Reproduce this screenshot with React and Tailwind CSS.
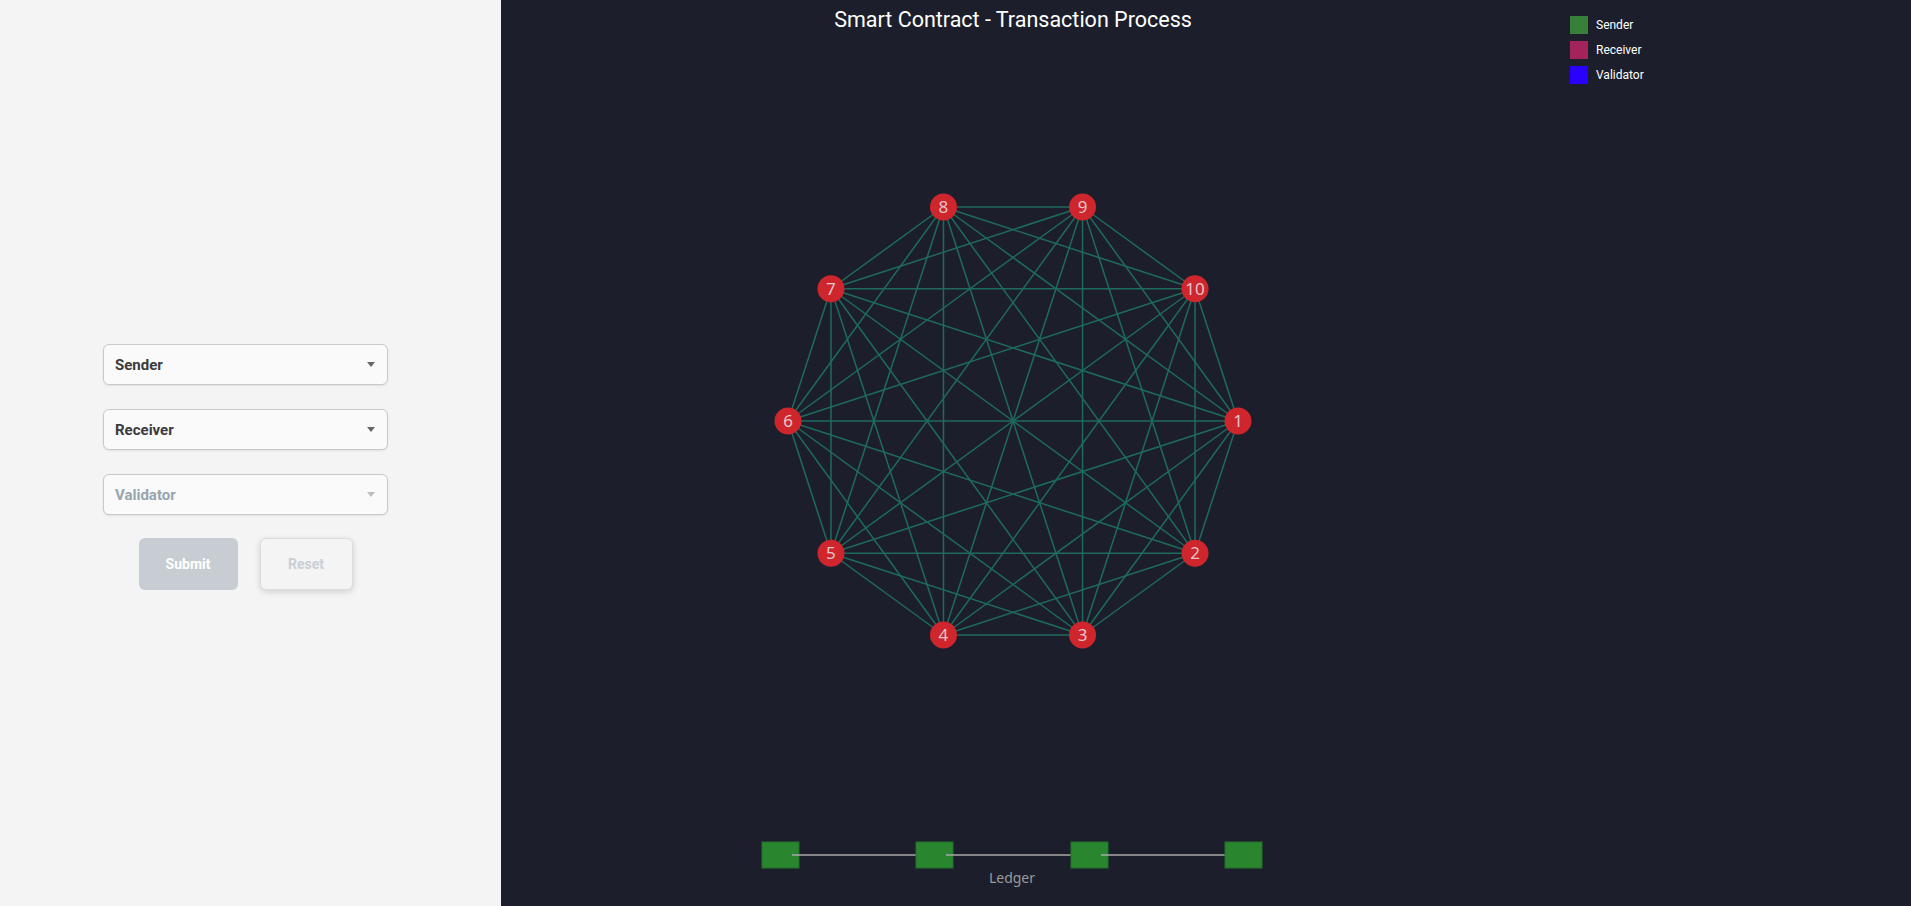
import React from "react";

const CX = 512;
const CY = 381;
const R = 225;

const nodes = Array.from({ length: 10 }, (_, i) => {
  const a = (i * 36 * Math.PI) / 180;
  return { id: i + 1, x: CX + R * Math.cos(a), y: CY + R * Math.sin(a) };
});

const edges = [];
nodes.forEach((a, i) => {
  nodes.slice(i + 1).forEach((b) => edges.push([a, b]));
});

const legend = [
  { label: "Sender", color: "bg-[#37803a]" },
  { label: "Receiver", color: "bg-[#a3235a]" },
  { label: "Validator", color: "bg-[#2a00ff]" },
];

const blocks = [261, 415, 570, 724];

function SelectBox({ label, muted }) {
  return (
    <div className="flex h-[41px] w-[285px] items-center justify-between rounded-[6px] border border-[#c9c9c9] bg-[#fafafa] pl-[11px] pr-[12px] shadow-[0_1px_2px_rgba(0,0,0,0.08)]">
      <span className={`pt-px text-[15px] font-bold ${muted ? "text-[#98a4ae]" : "text-[#3b3b3b]"}`}>{label}</span>
      <span
        className={`h-0 w-0 border-x-[4px] border-t-[5px] border-x-transparent ${muted ? "border-t-[#bdbdbd]" : "border-t-[#666]"}`}
      />
    </div>
  );
}

export default function App() {
  return (
    <div className="flex h-[906px] w-full font-['Roboto',sans-serif]">
      {/* form panel */}
      <div className="h-full w-[501px] shrink-0 bg-[#f4f4f4] pl-[103px] pt-[344px]">
        <div className="flex w-[285px] flex-col gap-[24px]">
          <SelectBox label="Sender" />
          <SelectBox label="Receiver" />
          <SelectBox label="Validator" muted />
          <div className="-mt-px flex justify-center gap-[22px]">
            <button className="h-[52px] w-[99px] rounded-[6px] bg-[#c7cdd2] text-[14px] font-bold text-white">
              Submit
            </button>
            <button className="h-[52px] w-[93px] rounded-[6px] border border-[#dcdcdc] bg-[#f4f4f4] text-[14px] font-bold text-[#c9cfd4] shadow-[0_2px_6px_rgba(0,0,0,0.15)]">
              Reset
            </button>
          </div>
        </div>
      </div>

      {/* chart panel */}
      <div className="flex h-full flex-1 bg-[#1c1f2b]">
        <div className="flex w-[1024px] shrink-0 flex-col">
          <div className="h-[40px] text-center text-[21.5px] leading-[40px] text-white">
            Smart Contract - Transaction Process
          </div>
          <svg width="1024" height="760" className="block">
            {edges.map(([a, b], i) => (
              <line key={i} x1={a.x} y1={a.y} x2={b.x} y2={b.y} stroke="#1e6b5d" strokeWidth="1.5" />
            ))}
            {nodes.map((n) => (
              <g key={n.id}>
                <circle cx={n.x} cy={n.y} r="13.5" fill="#cf252d" />
                <text
                  x={n.x}
                  y={n.y + 6}
                  textAnchor="middle"
                  fontSize="17"
                  fill="#e3c6c8"
                  fontFamily="'Noto Sans', sans-serif"
                >
                  {n.id}
                </text>
              </g>
            ))}
          </svg>
          <svg width="1024" height="106" className="block">
            {blocks.map((x, i) => (
              <g key={x}>
                <rect x={x} y="42" width="37" height="26" fill="#2a862e" stroke="#23702a" strokeWidth="1" />
                {i < blocks.length - 1 && (
                  <line x1={x + 30} y1="55" x2={blocks[i + 1]} y2="55" stroke="#a9a9a9" strokeWidth="1.5" />
                )}
              </g>
            ))}
            <text x="511" y="83" textAnchor="middle" fontSize="14" fill="#9a9a9a" fontFamily="'Noto Sans', sans-serif">
              Ledger
            </text>
          </svg>
        </div>

        {/* legend */}
        <div className="ml-[45px] flex flex-col gap-[7px] pt-[16px]">
          {legend.map((l) => (
            <div key={l.label} className="flex items-center gap-[8px]">
              <span className={`h-[18px] w-[18px] ${l.color}`} />
              <span className="text-[12px] text-white">{l.label}</span>
            </div>
          ))}
        </div>
      </div>
    </div>
  );
}
